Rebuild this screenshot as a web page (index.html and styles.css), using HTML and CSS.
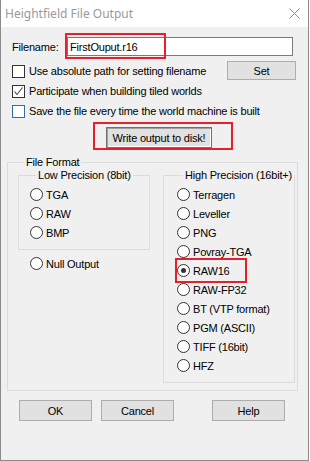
FILE: index.html
```html
<!DOCTYPE html>
<html lang="en">
<head>
    <meta charset="UTF-8">
    <title>Heightfield File Output</title>
    <link rel="stylesheet" href="styles.css">
</head>
<body>
<div class="window">
    <div class="titlebar">
        <span class="title">Heightfield File Output</span>
        <svg class="close" width="11" height="11" viewBox="0 0 11 11">
            <path d="M0.5 0.5 L10.5 10.5 M10.5 0.5 L0.5 10.5" stroke="#8c8c8c" stroke-width="1" fill="none"/>
        </svg>
    </div>
    <div class="content">
        <div class="top">
            <div class="fname-row">
                <span class="fname-label">Filename:</span>
                <input class="text" type="text" value="FirstOuput.r16">
                <div class="mark mark-fname"></div>
            </div>
            <div class="check-row">
                <span class="check"></span>
                <span>Use absolute path for setting filename</span>
                <button class="btn btn-set">Set</button>
            </div>
            <div class="check-row">
                <span class="check">
                    <svg width="11" height="11" viewBox="0 0 11 11">
                        <path d="M1.5 5.5 L4 8.5 L9.5 1.5" stroke="#444" stroke-width="1.1" fill="none"/>
                    </svg>
                </span>
                <span>Participate when building tiled worlds</span>
            </div>
            <div class="check-row">
                <span class="check check-focus"></span>
                <span>Save the file every time the world machine is built</span>
            </div>
            <div class="write-wrap">
                <button class="btn btn-write">Write output to disk!</button>
                <div class="mark mark-write"></div>
            </div>
        </div>

        <fieldset class="group group-format">
            <legend>File Format</legend>
            <div class="format-cols">
                <div class="col-low">
                    <fieldset class="group group-low">
                        <legend>Low Precision (8bit)</legend>
                        <div class="radio-row"><span class="radio"></span>TGA</div>
                        <div class="radio-row"><span class="radio"></span>RAW</div>
                        <div class="radio-row"><span class="radio"></span>BMP</div>
                    </fieldset>
                    <div class="radio-row null-row"><span class="radio"></span>Null Output</div>
                </div>
                <fieldset class="group group-high">
                    <legend>High Precision (16bit+)</legend>
                    <div class="radio-row"><span class="radio"></span>Terragen</div>
                    <div class="radio-row"><span class="radio"></span>Leveller</div>
                    <div class="radio-row"><span class="radio"></span>PNG</div>
                    <div class="radio-row"><span class="radio"></span>Povray-TGA</div>
                    <div class="radio-row marked">
                        <span class="radio on"></span>RAW16
                        <div class="mark mark-raw"></div>
                    </div>
                    <div class="radio-row"><span class="radio"></span>RAW-FP32</div>
                    <div class="radio-row"><span class="radio"></span>BT (VTP format)</div>
                    <div class="radio-row"><span class="radio"></span>PGM (ASCII)</div>
                    <div class="radio-row"><span class="radio"></span>TIFF (16bit)</div>
                    <div class="radio-row"><span class="radio"></span>HFZ</div>
                </fieldset>
            </div>
        </fieldset>

        <div class="buttons">
            <button class="btn btn-dlg">OK</button>
            <button class="btn btn-dlg btn-cancel">Cancel</button>
            <button class="btn btn-dlg btn-help">Help</button>
        </div>
    </div>
</div>
</body>
</html>
```

FILE: styles.css
```css
body {
    margin: 0;
    background: #ffffff;
    font-family: "Liberation Sans", Arial, sans-serif;
    font-size: 11px;
    letter-spacing: -0.2px;
    color: #000000;
}

.window {
    width: 309px;
    height: 461px;
    box-sizing: border-box;
    border: 1px solid #8a8a8a;
    border-top: none;
    background: #f0f0f0;
}

.titlebar {
    height: 27px;
    background: #ffffff;
    display: flex;
    align-items: center;
    padding-left: 4px;
}

.title {
    font-family: "Noto Sans", sans-serif;
    font-size: 12px;
    letter-spacing: 0;
    color: #999999;
}

.close {
    margin-left: auto;
    margin-right: 8px;
}

.content {
    padding-left: 6px;
}

.top {
    width: 289px;
    box-sizing: border-box;
    padding-left: 5px;
}

.fname-row {
    position: relative;
    display: flex;
    align-items: center;
    height: 19px;
    margin-top: 10px;
}

.fname-label {
    width: 55px;
}

.text {
    width: 226px;
    height: 19px;
    box-sizing: border-box;
    margin: 0;
    border: 1px solid #7a7a7a;
    padding: 0 2px;
    font-family: inherit;
    font-size: 11px;
    letter-spacing: inherit;
    background: #ffffff;
    outline: none;
}

.mark {
    position: absolute;
    box-sizing: border-box;
    border: 2px solid #e5202a;
}

.mark-fname {
    left: 53px;
    top: -4px;
    width: 101px;
    height: 26px;
}

.check-row {
    display: flex;
    align-items: center;
    height: 20px;
}

.fname-row + .check-row {
    margin-top: 5px;
}

.check {
    width: 13px;
    height: 13px;
    box-sizing: border-box;
    border: 1px solid #333333;
    background: #ffffff;
    margin-right: 4px;
    display: flex;
    align-items: center;
    justify-content: center;
}

.check-focus {
    border-color: #2f6db5;
}

.btn {
    margin: 0;
    padding: 0;
    font-family: inherit;
    font-size: 11px;
    letter-spacing: inherit;
    color: #000000;
    background: #e1e1e1;
    border: 1px solid #adadad;
    box-sizing: border-box;
}

.btn-set {
    align-self: flex-start;
    margin-left: auto;
    width: 69px;
    height: 19px;
}

.write-wrap {
    position: relative;
    width: 106px;
    height: 21px;
    margin-top: 6px;
    margin-left: 94px;
}

.btn-write {
    width: 106px;
    height: 21px;
    border: 1px solid #707070;
    box-shadow: inset 1px 1px 0 #a0a0a0, inset -1px -1px 0 #ffffff;
}

.mark-write {
    left: -13px;
    top: -5px;
    width: 140px;
    height: 28px;
}

.group {
    margin: 0;
    padding: 0;
    min-width: 0;
    box-sizing: border-box;
    border: 1px solid #dcdcdc;
}

.group legend {
    margin-left: 6px;
    padding: 0 2px;
    line-height: 13px;
    white-space: nowrap;
}

.group-format {
    width: 291px;
    margin-top: 8px;
    padding: 0 0 7px 10px;
}

.format-cols {
    display: flex;
    align-items: flex-start;
    gap: 13px;
}

.col-low {
    width: 132px;
}

.group-low {
    width: 132px;
    padding: 3px 0 7px 11px;
}

.group-high {
    width: 132px;
    padding: 3px 0 7px 13px;
}

.radio-row {
    position: relative;
    display: flex;
    align-items: center;
    height: 19px;
}

.null-row {
    margin-top: 4px;
    padding-left: 12px;
}

.radio {
    position: relative;
    width: 13px;
    height: 13px;
    box-sizing: border-box;
    border: 1px solid #333333;
    border-radius: 50%;
    background: #ffffff;
    margin-right: 3px;
}

.radio.on::after {
    content: "";
    position: absolute;
    left: 3px;
    top: 3px;
    width: 5px;
    height: 5px;
    border-radius: 50%;
    background: #333333;
}

.mark-raw {
    left: -2px;
    top: -3px;
    width: 72px;
    height: 25px;
}

.buttons {
    display: flex;
    margin-top: 9px;
    padding-left: 12px;
}

.btn-dlg {
    width: 73px;
    height: 21px;
}

.btn-cancel {
    margin-left: 9px;
}

.btn-help {
    margin-left: 38px;
}
```
